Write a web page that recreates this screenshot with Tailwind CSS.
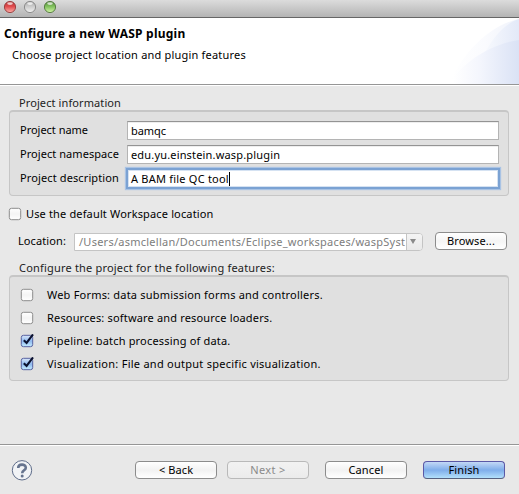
<!DOCTYPE html>
<html lang="en">
<head>
<meta charset="utf-8">
<title>Configure a new WASP plugin</title>
<script src="https://cdn.jsdelivr.net/npm/@tailwindcss/browser@4"></script>
</head>
<body class="w-[519px] h-[494px] overflow-hidden bg-[#e8e8e8] font-['Noto_Sans',sans-serif] text-[11px] leading-[14px] text-black whitespace-nowrap flex flex-col">
<svg class="absolute w-0 h-0" aria-hidden="true">
  <defs>
    <linearGradient id="box" x1="0" y1="0" x2="0" y2="1"><stop offset="0" stop-color="#fff"/><stop offset=".5" stop-color="#f4f4f4"/><stop offset="1" stop-color="#fff"/></linearGradient>
    <linearGradient id="boxOn" x1="0" y1="0" x2="0" y2="1"><stop offset="0" stop-color="#dbe8fa"/><stop offset=".5" stop-color="#8fb9ef"/><stop offset="1" stop-color="#c4ecff"/></linearGradient>
    <symbol id="off" viewBox="0 0 14 14"><rect x="1.3" y="1.3" width="11.4" height="11.4" rx="2.2" fill="url(#box)" stroke="#8c8c8c"/></symbol>
    <symbol id="on" viewBox="0 0 14 14"><rect x="1.3" y="1.3" width="11.4" height="11.4" rx="2.2" fill="url(#boxOn)" stroke="#5862a0"/><path d="M3.8 6.2L6.6 9L13 .4" fill="none" stroke="#0b1230" stroke-width="2.1"/></symbol>
  </defs>
</svg>

<!-- Title bar -->
<div class="h-[18px] shrink-0 border-b border-[#666] bg-linear-to-b from-[#dcdcdc] to-[#b4b4b4]">
  <svg class="block" width="60" height="17" viewBox="0 0 60 17">
    <defs>
      <linearGradient id="r" x1="0" y1="0" x2="0" y2="1"><stop offset="0" stop-color="#b5383a"/><stop offset=".45" stop-color="#e04a4c"/><stop offset="1" stop-color="#ffb0aa"/></linearGradient>
      <linearGradient id="n" x1="0" y1="0" x2="0" y2="1"><stop offset="0" stop-color="#aaa"/><stop offset=".5" stop-color="#cfcfcf"/><stop offset="1" stop-color="#f2f2f2"/></linearGradient>
      <linearGradient id="g" x1="0" y1="0" x2="0" y2="1"><stop offset="0" stop-color="#55883c"/><stop offset=".45" stop-color="#80c05c"/><stop offset="1" stop-color="#d3f6a8"/></linearGradient>
    </defs>
    <circle cx="10" cy="7" r="5.6" fill="url(#r)" stroke="#943a3a" stroke-width=".9"/>
    <circle cx="30" cy="7" r="5.6" fill="url(#n)" stroke="#858585" stroke-width=".9"/>
    <circle cx="50" cy="7" r="5.6" fill="url(#g)" stroke="#50753c" stroke-width=".9"/>
    <g fill="#fff" fill-opacity=".7"><ellipse cx="10" cy="3.6" rx="2.8" ry="1.3"/><ellipse cx="30" cy="3.6" rx="2.8" ry="1.3"/><ellipse cx="50" cy="3.6" rx="2.8" ry="1.3"/></g>
  </svg>
</div>

<!-- Wizard banner -->
<div class="h-[67px] shrink-0 flex justify-between bg-white border-b border-[#969696]">
  <div class="pl-1 pt-[9px]">
    <h1 class="text-[12px] leading-[14px] font-bold tracking-[.24px]">Configure a new WASP plugin</h1>
    <p class="pl-2 pt-[7px] tracking-[.2px]">Choose project location and plugin features</p>
  </div>
  <svg class="block" width="72" height="66" viewBox="0 0 72 66">
    <defs>
      <linearGradient id="w1" gradientUnits="userSpaceOnUse" x1="4" y1="0" x2="72" y2="0"><stop offset="0" stop-color="#fff"/><stop offset=".5" stop-color="#fafbfe"/><stop offset="1" stop-color="#f0f3fb"/></linearGradient>
      <linearGradient id="w2" gradientUnits="userSpaceOnUse" x1="36" y1="0" x2="72" y2="0"><stop offset="0" stop-color="#f8fafe"/><stop offset="1" stop-color="#e3e9f8"/></linearGradient>
      <linearGradient id="w3" gradientUnits="userSpaceOnUse" x1="6" y1="0" x2="72" y2="0"><stop offset="0" stop-color="#fff"/><stop offset=".4" stop-color="#f4f6fd"/><stop offset="1" stop-color="#dae2f5"/></linearGradient>
    </defs>
    <path d="M2 66C14 38 40 8 72 1V66Z" fill="url(#w1)"/>
    <path d="M34 42C44 22 56 6 72 1V42Z" fill="url(#w2)"/>
    <path d="M2 66C14 46 42 26 72 22V66Z" fill="url(#w3)"/>
  </svg>
</div>

<!-- Page content -->
<main class="h-[359px] shrink-0 border-t border-white pl-[9px] pr-[10px] pt-[10px] flex flex-col">
  <h2 class="pl-[10px] h-[14px] text-[#222] tracking-[.1px]">Project information</h2>
  <section class="h-[86px] rounded-[4px] border border-t-2 border-[#c6c6c6] bg-[#e0e0e0] pl-[10px] pr-[9px] pt-[9px] flex flex-col gap-[5px]">
    <div class="h-[19px] flex items-center"><span class="w-[107px] pb-[2px] tracking-[-.02px]">Project name</span>
      <div class="w-[372px] h-[19px] border border-[#b4b4b4] border-t-[#949494] bg-white pl-[3px] pt-[2px] tracking-[-.05px] shadow-[inset_0_1px_0_#eee]">bamqc</div></div>
    <div class="h-[19px] flex items-center"><span class="w-[107px] pb-[2px] tracking-[.06px]">Project namespace</span>
      <div class="w-[372px] h-[19px] border border-[#b4b4b4] border-t-[#949494] bg-white pl-[3px] pt-[2px] tracking-[.17px] shadow-[inset_0_1px_0_#eee]">edu.yu.einstein.wasp.plugin</div></div>
    <div class="h-[19px] flex items-center"><span class="w-[107px] pb-[2px] tracking-[.12px]">Project description</span>
      <div class="w-[372px] h-[19px] border border-[#7ba2d3] bg-white pl-[3px] pt-[2px] tracking-[.22px] flex shadow-[0_0_0_1px_#7ba2d3,0_0_1px_2px_#a9c3e4,inset_0_0_0_1px_#d5e2f2]">A BAM file QC tool<i class="w-px h-[14px] bg-black"></i></div></div>
  </section>

  <div class="mt-[11px] h-[14px] flex items-center"><svg class="-ml-px mr-[4px]" width="14" height="14"><use href="#off"/></svg><span class="tracking-[.15px]">Use the default Workspace location</span></div>

  <div class="mt-[11px] h-[18px] flex items-center pl-[9px]">
    <span class="w-[56px] tracking-[.1px]">Location:</span>
    <div class="w-[349px] h-[18px] mt-px flex border border-[#c4c4c4] rounded-r-[4px] bg-white">
      <span class="w-[331px] pl-1 pt-px text-[#7d7d7d] tracking-[.25px] overflow-hidden">/Users/asmclellan/Documents/Eclipse_workspaces/waspSyst</span>
      <span class="flex-1 border-l border-[#c4c4c4] rounded-r-[3px] bg-linear-to-b from-[#f4f4f4] to-[#e9e9e9] flex items-center justify-center"><svg class="-ml-[3px]" width="6" height="5" viewBox="0 0 6 5"><path d="M0 0H6L3 5Z" fill="#8a8a8a"/></svg></span>
    </div>
    <div class="ml-[12px] w-[72px] h-[18px] border border-[#8c8c8c] rounded-[4px] bg-linear-to-b from-white via-[#f5f5f5] to-white text-center pt-px tracking-[.13px]">Browse...</div>
  </div>

  <h2 class="mt-[11px] pl-[10px] h-[14px] text-[#222] tracking-[.19px]">Configure the project for the following features:</h2>
  <section class="h-[106px] rounded-[4px] border border-t-2 border-[#c6c6c6] bg-[#e0e0e0] pl-[10px] pt-[11px] flex flex-col gap-[9px]">
    <div class="h-[14px] flex items-center gap-[13px]"><svg width="14" height="14"><use href="#off"/></svg><span class="tracking-[.2px]">Web Forms: data submission forms and controllers.</span></div>
    <div class="h-[14px] flex items-center gap-[13px]"><svg width="14" height="14"><use href="#off"/></svg><span class="tracking-[.17px]">Resources: software and resource loaders.</span></div>
    <div class="h-[14px] flex items-center gap-[13px]"><svg width="14" height="14"><use href="#on"/></svg><span class="tracking-[.18px]">Pipeline: batch processing of data.</span></div>
    <div class="h-[14px] flex items-center gap-[13px]"><svg width="14" height="14"><use href="#on"/></svg><span class="tracking-[.26px]">Visualization: File and output specific visualization.</span></div>
  </section>
</main>

<!-- Button bar -->
<footer class="h-[50px] shrink-0 border-t border-[#969696] shadow-[inset_0_1px_0_#fff] flex pt-[16px] pl-[11px] text-center">
  <svg class="-mt-[1px] mr-[102px]" width="22" height="22" viewBox="0 0 22 22"><circle cx="11" cy="10.3" r="9.7" fill="#f1f3f6" stroke="#5f6d8a"/><path d="M7.2 8C7.2 3.6 14.8 3.6 14.8 7.7C14.8 10.4 11.2 10.2 11.2 13.2" fill="none" stroke="#66748f" stroke-width="2.6"/><circle cx="11.2" cy="15.9" r="1.5" fill="#66748f"/></svg>
  <div class="w-[82px] h-[18px] border border-[#8c8c8c] rounded-[4px] bg-linear-to-b from-white via-[#f2f2f2] to-white pt-px tracking-[.1px]">&lt; Back</div>
  <div class="ml-[10px] w-[82px] h-[18px] border border-[#b9b9b9] rounded-[4px] bg-linear-to-b from-[#f2f2f2] to-[#ebebeb] text-[#8a8a8a] pt-px tracking-[.35px]">Next &gt;</div>
  <div class="ml-[16px] w-[82px] h-[18px] border border-[#8c8c8c] rounded-[4px] bg-linear-to-b from-white via-[#f2f2f2] to-white pt-px tracking-[.13px]">Cancel</div>
  <div class="ml-[16px] w-[82px] h-[18px] border border-[#5a58a6] border-b-[#55617f] rounded-[4px] bg-linear-to-b from-[#c3d8f6] via-[#7fadea] to-[#b2e0fb] pt-px tracking-[.13px]">Finish</div>
</footer>
</body>
</html>
